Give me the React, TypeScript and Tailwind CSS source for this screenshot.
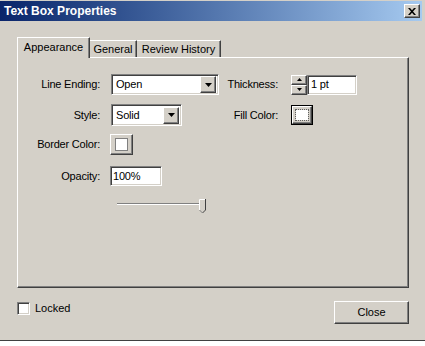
import React from "react";

// Win2k-ish bevel helpers
const raised =
  "border border-t-white border-l-white border-r-[#404040] border-b-[#404040] shadow-[inset_-1px_-1px_0_#808080] bg-[#d4d0c8]";
const sunken =
  "border border-t-[#808080] border-l-[#808080] border-r-white border-b-white shadow-[inset_1px_1px_0_#404040,inset_-1px_-1px_0_#d4d0c8] bg-white";

function DownArrow() {
  return (
    <svg width="7" height="4" viewBox="0 0 7 4">
      <polygon points="0,0 7,0 3.5,4" fill="#000" />
    </svg>
  );
}

function Combo({ value, width }: { value: string; width: string }) {
  return (
    <div className={`${sunken} ${width} h-full flex items-center pl-[4px] pr-[2px]`}>
      <span className="flex-1">{value}</span>
      <div className={`${raised} w-[16px] h-[17px] flex items-center justify-center`}>
        <DownArrow />
      </div>
    </div>
  );
}

function Spinner() {
  return (
    <div className="flex flex-col w-[16px] h-[20px]">
      <div className={`${raised} h-[10px] flex items-center justify-center`}>
        <svg width="5" height="3" viewBox="0 0 5 3">
          <polygon points="2.5,0 5,3 0,3" fill="#000" />
        </svg>
      </div>
      <div className={`${raised} h-[10px] flex items-center justify-center`}>
        <svg width="5" height="3" viewBox="0 0 5 3">
          <polygon points="0,0 5,0 2.5,3" fill="#000" />
        </svg>
      </div>
    </div>
  );
}

function Slider() {
  return (
    <svg width="90" height="16" viewBox="0 0 90 16">
      <rect x="0" y="5" width="85" height="1" fill="#808080" />
      <rect x="0" y="6" width="85" height="1" fill="#ffffff" />
      <polygon points="82,1 89,1 89,12 85.5,15 82,12" fill="#d4d0c8" />
      <polyline points="82.5,12 82.5,1.5 88.5,1.5" fill="none" stroke="#fff" strokeWidth="1" />
      <polyline points="88.5,1 88.5,12 85.5,15" fill="none" stroke="#404040" strokeWidth="1" />
      <polyline points="82.5,12 85.5,15" fill="none" stroke="#808080" strokeWidth="1" />
    </svg>
  );
}

export default function App() {
  return (
    <div className="w-[425px] h-[346px] bg-white overflow-hidden font-['Liberation_Sans',Arial,sans-serif] text-[11px] text-black">
      <div className="h-[341px] bg-[#d4d0c8] border-b border-[#404040] pt-px pr-[3px] flex flex-col">
        {/* title bar */}
        <div className="h-[20px] bg-linear-to-r from-[#0a246a] to-[#a6caf0] flex items-center pl-[4px] pr-[2px]">
          <span className="font-bold text-white text-[12px]">Text Box Properties</span>
          <div className={`${raised} ml-auto w-[16px] h-[14px] flex items-center justify-center`}>
            <svg width="8" height="7" viewBox="0 0 8 7">
              <path d="M0 0h2l2 2.3L6 0h2L5 3.5 8 7H6L4 4.7 2 7H0l3-3.5z" fill="#000" />
            </svg>
          </div>
        </div>

        <div className="pl-[17px] pr-[13px]">
          {/* tabs */}
          <div className="mt-[16px] h-[20px] flex items-end">
            <div className="relative z-10 -mb-px h-[21px] w-[73px] bg-[#d4d0c8] border-l border-t border-r border-l-white border-t-white border-r-[#404040] shadow-[inset_-1px_0_0_#808080] flex items-center justify-center pb-px">
              Appearance
            </div>
            <div className="h-[17px] w-[47px] border-t border-r border-t-white border-r-[#404040] shadow-[inset_-1px_0_0_#808080] flex items-center justify-center">
              General
            </div>
            <div className="h-[17px] w-[84px] border-t border-r border-t-white border-r-[#404040] shadow-[inset_-1px_0_0_#808080] flex items-center justify-center">
              Review History
            </div>
          </div>

          {/* panel */}
          <div className="h-[231px] border border-t-white border-l-white border-r-[#404040] border-b-[#404040] shadow-[inset_-1px_-1px_0_#808080] tracking-[-0.2px]">
            <div className="mt-[16px] h-[21px] flex items-center">
              <span className="w-[82px] text-right">Line Ending:</span>
              <div className="ml-[11px] h-full">
                <Combo value="Open" width="w-[108px]" />
              </div>
              <span className="w-[59px] text-right">Thickness:</span>
              <div className="ml-[13px] flex items-center">
                <Spinner />
                <div className={`${sunken} w-[50px] h-[20px] flex items-center pl-[3px]`}>1 pt</div>
              </div>
            </div>

            <div className="mt-[9px] h-[22px] flex items-center">
              <span className="w-[82px] text-right">Style:</span>
              <div className="ml-[11px] h-full">
                <Combo value="Solid" width="w-[71px]" />
              </div>
              <span className="w-[96px] text-right">Fill Color:</span>
              <div className="ml-[13px] w-[22px] h-[20px] border border-black">
                <div className={`${raised} w-full h-full flex items-center justify-center`}>
                  <div className="w-[12px] h-[10px] bg-white outline-1 outline-dotted outline-[#606060]" />
                </div>
              </div>
            </div>

            <div className="mt-[8px] h-[21px] flex items-center">
              <span className="w-[82px] text-right">Border Color:</span>
              <div className={`${raised} ml-[10px] w-[23px] h-[21px] flex items-center justify-center`}>
                <div className="w-[13px] h-[13px] bg-white border border-[#808080]" />
              </div>
            </div>

            <div className="mt-[11px] h-[20px] flex items-center">
              <span className="w-[82px] text-right">Opacity:</span>
              <div className={`${sunken} ml-[10px] w-[52px] h-[20px] flex items-center pl-[2px]`}>100%</div>
            </div>

            <div className="mt-[12px] h-[16px] pl-[99px] flex">
              <Slider />
            </div>
          </div>

          {/* bottom row */}
          <div className="mt-[13px] flex items-start">
            <div className="mt-px flex items-center h-[13px]">
              <div className={`${sunken} w-[13px] h-[13px]`} />
              <span className="ml-[5px]">Locked</span>
            </div>
            <div className={`${raised} ml-auto w-[75px] h-[23px] flex items-center justify-center`}>
              Close
            </div>
          </div>
        </div>
      </div>
    </div>
  );
}
